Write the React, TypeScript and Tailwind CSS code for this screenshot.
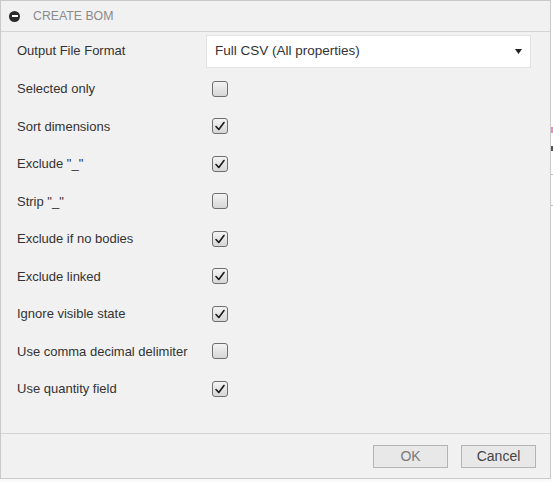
import React from 'react';

const rows: { label: string; checked: boolean }[] = [
  { label: 'Selected only', checked: false },
  { label: 'Sort dimensions', checked: true },
  { label: 'Exclude "_"', checked: true },
  { label: 'Strip "_"', checked: false },
  { label: 'Exclude if no bodies', checked: true },
  { label: 'Exclude linked', checked: true },
  { label: 'Ignore visible state', checked: true },
  { label: 'Use comma decimal delimiter', checked: false },
  { label: 'Use quantity field', checked: true },
];

const Checkbox = ({ checked }: { checked: boolean }) => (
  <div className="ml-[6px] flex h-[16px] w-[16px] items-center justify-center rounded-[3px] border border-[#6f6f6f] bg-gradient-to-b from-[#f4f4f4] to-[#d6d6d6]">
    {checked && (
      <svg width="12" height="12" viewBox="0 0 12 12">
        <path d="M2 6.5 L4.8 9.5 L10 2.5" fill="none" stroke="#1a1a1a" strokeWidth="1.6" strokeLinecap="round" strokeLinejoin="round" />
      </svg>
    )}
  </div>
);

const App = () => {
  return (
    <div className="flex h-[482px] w-[553px] bg-[#fafafa] font-['Liberation_Sans',Arial,sans-serif] text-[13px] text-[#333]">
      <div className="flex h-[479px] w-[551px] flex-col border border-[#c9c9c9] bg-[#f1f1f1]">
        {/* header */}
        <div className="flex h-[31px] items-center border-b border-[#d4d4d4] pl-[8px]">
          <div className="flex h-[11px] w-[11px] items-center justify-center rounded-full bg-[#2b2b2b]">
            <div className="h-[2px] w-[6px] bg-white" />
          </div>
          <span className="ml-[13px] text-[12.3px] text-[#8a8a8a]">CREATE BOM</span>
        </div>

        {/* body */}
        <div className="flex flex-1 flex-col pl-4">
          <div className="flex h-[38px] items-center">
            <div className="w-[189px]">Output File Format</div>
            <div className="flex h-[33px] w-[325px] items-center justify-between border border-[#e2e2e2] bg-white pl-2 pr-[8px]">
              <span className="text-[13.5px]">Full CSV (All properties)</span>
              <svg width="7" height="5" viewBox="0 0 7 5">
                <path d="M0 0 H7 L3.5 5 Z" fill="#222" />
              </svg>
            </div>
          </div>
          {rows.map((r) => (
            <div key={r.label} className="flex h-[37.5px] items-center">
              <div className="w-[189px]">{r.label}</div>
              <Checkbox checked={r.checked} />
            </div>
          ))}
        </div>

        {/* footer */}
        <div className="flex h-[45px] items-center justify-end gap-[13px] border-t border-[#d4d4d4] pr-[14px] pt-[1px]">
          <button className="h-[23px] w-[75px] border border-[#b5b5b5] bg-[#e8e8e8] text-[14px] text-[#7a7a7a]">OK</button>
          <button className="h-[23px] w-[75px] border border-[#b5b5b5] bg-[#e8e8e8] text-[14px] text-[#444]">Cancel</button>
        </div>
      </div>
      <div className="flex w-[2px] flex-col">
        <div className="h-[127px] bg-white" />
        <div className="h-[6px] bg-[#e98bc8]" />
        <div className="h-[13px] bg-white" />
        <div className="h-[5px] bg-[#555]" />
        <div className="h-[23px] bg-white" />
        <div className="h-[1px] bg-[#bbb]" />
        <div className="h-[30px] bg-white" />
        <div className="h-[1px] bg-[#bbb]" />
        <div className="flex-1 bg-white" />
      </div>
    </div>
  );
};

export default App;
